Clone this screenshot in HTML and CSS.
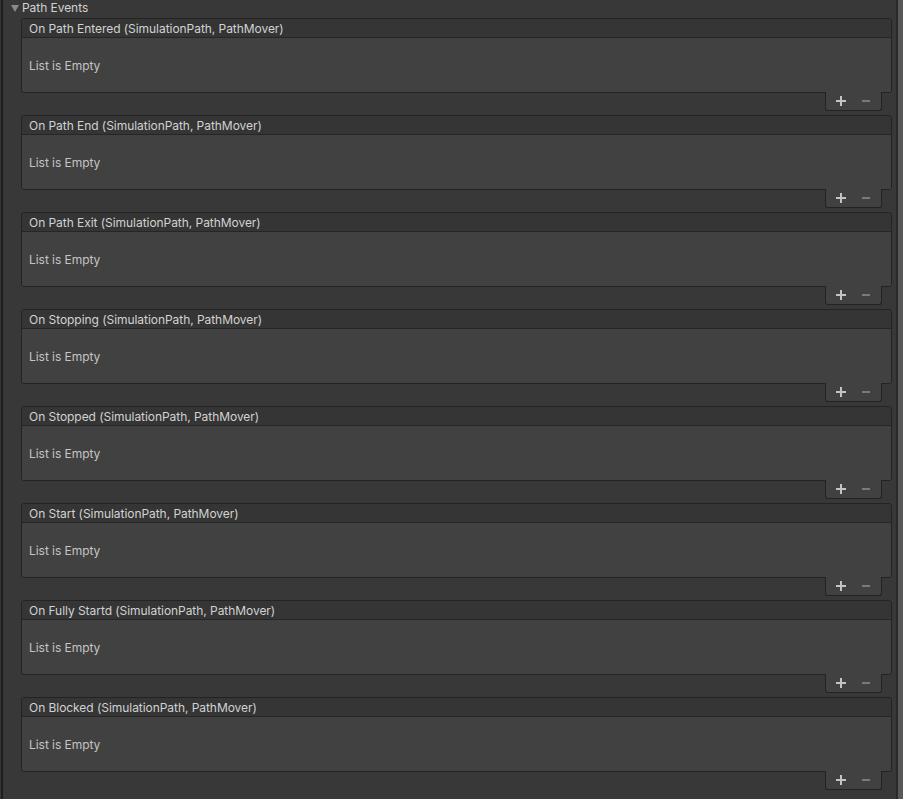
FILE: index.html
```html
<!DOCTYPE html>
<html>
<head>
<meta charset="utf-8">
<link rel="stylesheet" href="styles.css">
</head>
<body>
<div class="window">
  <div class="inspector">
    <div class="foldout">
      <span class="arrow"></span>
      <span class="foldout-label">Path Events</span>
    </div>
    <div class="events">
      <div class="event">
        <div class="card">
          <div class="card-header">On Path Entered (SimulationPath, PathMover)</div>
          <div class="card-body">List is Empty</div>
        </div>
        <div class="footer"><svg class="plus" width="10" height="10" viewBox="0 0 10 10"><rect x="4" y="0" width="2" height="10"/><rect x="0" y="4" width="10" height="2"/></svg><span class="minus"></span></div>
      </div>
      <div class="event">
        <div class="card">
          <div class="card-header">On Path End (SimulationPath, PathMover)</div>
          <div class="card-body">List is Empty</div>
        </div>
        <div class="footer"><svg class="plus" width="10" height="10" viewBox="0 0 10 10"><rect x="4" y="0" width="2" height="10"/><rect x="0" y="4" width="10" height="2"/></svg><span class="minus"></span></div>
      </div>
      <div class="event">
        <div class="card">
          <div class="card-header">On Path Exit (SimulationPath, PathMover)</div>
          <div class="card-body">List is Empty</div>
        </div>
        <div class="footer"><svg class="plus" width="10" height="10" viewBox="0 0 10 10"><rect x="4" y="0" width="2" height="10"/><rect x="0" y="4" width="10" height="2"/></svg><span class="minus"></span></div>
      </div>
      <div class="event">
        <div class="card">
          <div class="card-header">On Stopping (SimulationPath, PathMover)</div>
          <div class="card-body">List is Empty</div>
        </div>
        <div class="footer"><svg class="plus" width="10" height="10" viewBox="0 0 10 10"><rect x="4" y="0" width="2" height="10"/><rect x="0" y="4" width="10" height="2"/></svg><span class="minus"></span></div>
      </div>
      <div class="event">
        <div class="card">
          <div class="card-header">On Stopped (SimulationPath, PathMover)</div>
          <div class="card-body">List is Empty</div>
        </div>
        <div class="footer"><svg class="plus" width="10" height="10" viewBox="0 0 10 10"><rect x="4" y="0" width="2" height="10"/><rect x="0" y="4" width="10" height="2"/></svg><span class="minus"></span></div>
      </div>
      <div class="event">
        <div class="card">
          <div class="card-header">On Start (SimulationPath, PathMover)</div>
          <div class="card-body">List is Empty</div>
        </div>
        <div class="footer"><svg class="plus" width="10" height="10" viewBox="0 0 10 10"><rect x="4" y="0" width="2" height="10"/><rect x="0" y="4" width="10" height="2"/></svg><span class="minus"></span></div>
      </div>
      <div class="event">
        <div class="card">
          <div class="card-header">On Fully Startd (SimulationPath, PathMover)</div>
          <div class="card-body">List is Empty</div>
        </div>
        <div class="footer"><svg class="plus" width="10" height="10" viewBox="0 0 10 10"><rect x="4" y="0" width="2" height="10"/><rect x="0" y="4" width="10" height="2"/></svg><span class="minus"></span></div>
      </div>
      <div class="event">
        <div class="card">
          <div class="card-header">On Blocked (SimulationPath, PathMover)</div>
          <div class="card-body">List is Empty</div>
        </div>
        <div class="footer"><svg class="plus" width="10" height="10" viewBox="0 0 10 10"><rect x="4" y="0" width="2" height="10"/><rect x="0" y="4" width="10" height="2"/></svg><span class="minus"></span></div>
      </div>
    </div>
  </div>
  <div class="scrollbar"></div>
</div>
</body>
</html>
```
FILE: styles.css
```css
html, body {
  margin: 0;
  padding: 0;
  background: #383838;
  height: 100%;
  overflow: hidden;
}
body {
  font-family: Inter, "Noto Sans", sans-serif;
  font-size: 12px;
  letter-spacing: -0.05px;
  color: #d2d2d2;
}
.window {
  display: flex;
  height: 799px;
  margin-left: 1px;
  border-left: 2px solid #1e1e1e;
}
.inspector {
  flex: 1;
  min-width: 0;
}
.scrollbar {
  width: 5px;
  border-left: 2px solid #2a2a2a;
  margin-left: 1px;
  background: #585858;
}
.foldout {
  height: 15px;
  display: flex;
  align-items: center;
  padding-left: 8px;
}
.arrow {
  width: 0;
  height: 0;
  border-left: 4.5px solid transparent;
  border-right: 4.5px solid transparent;
  border-top: 7px solid #8a8a8a;
  margin-right: 3px;
  margin-top: 1px;
}
.foldout-label {
  color: #d2d2d2;
  line-height: 15px;
}
.events {
  padding-top: 3px;
  padding-left: 18px;
  padding-right: 3px;
  display: flex;
  flex-direction: column;
  gap: 4px;
}
.event {
  display: flex;
  flex-direction: column;
}
.card {
  border: 1px solid #232323;
  border-radius: 3px;
  overflow: hidden;
}
.card-header {
  height: 19px;
  box-sizing: border-box;
  padding-top: 1px;
  line-height: 18px;
  background: #353535;
  border-bottom: 1px solid #262626;
  padding-left: 7px;
  color: #d2d2d2;
  white-space: nowrap;
}
.card-body {
  height: 54px;
  box-sizing: border-box;
  background: #414141;
  padding-left: 7px;
  padding-top: 20px;
  line-height: 16px;
  color: #c4c4c4;
}
.footer {
  align-self: flex-end;
  margin-right: 10px;
  width: 55px;
  height: 18px;
  background: #414141;
  border: 1px solid #232323;
  border-top: none;
  border-radius: 0 0 3px 3px;
  display: flex;
  align-items: center;
  margin-top: -1px;
}
.plus {
  fill: #c4c4c4;
  margin-left: 10px;
  display: block;
}
.minus {
  width: 8px;
  height: 2px;
  background: #7a7a7a;
  margin-left: 16px;
}
```
